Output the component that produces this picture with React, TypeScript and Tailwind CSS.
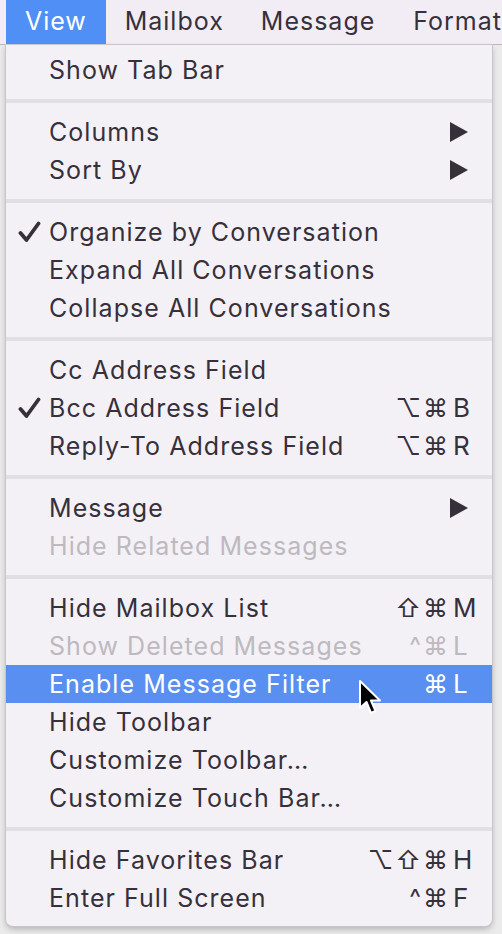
import React from "react";

type Item =
  | { sep: true }
  | {
      label: string;
      checked?: boolean;
      disabled?: boolean;
      active?: boolean;
      submenu?: boolean;
      mods?: string;
      keyName?: string;
    };

const ITEMS: Item[] = [
  { label: "Show Tab Bar" },
  { sep: true },
  { label: "Columns", submenu: true },
  { label: "Sort By", submenu: true },
  { sep: true },
  { label: "Organize by Conversation", checked: true },
  { label: "Expand All Conversations" },
  { label: "Collapse All Conversations" },
  { sep: true },
  { label: "Cc Address Field" },
  { label: "Bcc Address Field", checked: true, mods: "⌥⌘", keyName: "B" },
  { label: "Reply-To Address Field", mods: "⌥⌘", keyName: "R" },
  { sep: true },
  { label: "Message", submenu: true },
  { label: "Hide Related Messages", disabled: true },
  { sep: true },
  { label: "Hide Mailbox List", mods: "⇧⌘", keyName: "M" },
  { label: "Show Deleted Messages", disabled: true, mods: "^⌘", keyName: "L" },
  { label: "Enable Message Filter", active: true, mods: "⌘", keyName: "L" },
  { label: "Hide Toolbar" },
  { label: "Customize Toolbar…" },
  { label: "Customize Touch Bar…" },
  { sep: true },
  { label: "Hide Favorites Bar", mods: "⌥⇧⌘", keyName: "H" },
  { label: "Enter Full Screen", mods: "^⌘", keyName: "F" },
];

const FONT = "font-['Inter','DejaVu_Sans',sans-serif]";

export default function App() {
  return (
    <div className={`h-[934px] w-[502px] overflow-hidden bg-[#ebebeb] ${FONT}`}>
      {/* menu bar */}
      <div className="flex h-[45px] items-stretch border-b border-[#bcb8be] bg-[#f2edf5] text-[25px] tracking-[1px] text-[#36303b]">
        <div className="ml-[6px] flex w-[100px] items-center justify-center bg-[#4f8ff6] text-white">
          View
        </div>
        <div className="ml-[19px] flex items-center">Mailbox</div>
        <div className="ml-[37px] flex items-center">Message</div>
        <div className="ml-[38px] flex items-center whitespace-nowrap">Format</div>
      </div>

      {/* dropdown */}
      <div className="ml-[6px] w-[486px] rounded-b-[7px] bg-[#f4f1f6] pb-[9px] pt-[6px] shadow-[0_3px_6px_rgba(0,0,0,0.25)] ring-1 ring-[#c9c6cb]">
        {ITEMS.map((item, i) =>
          "sep" in item ? (
            <div key={i} className="my-[10px] h-[4px] bg-[#e1dee4]" />
          ) : (
            <Row key={i} item={item} />
          ),
        )}
      </div>
    </div>
  );
}

function Row({ item }: { item: Exclude<Item, { sep: true }> }) {
  const color = item.active
    ? "text-white"
    : item.disabled
      ? "text-[#bdb9bf]"
      : "text-[#36303b]";
  return (
    <div
      className={[
        "relative flex h-[38px] items-center text-[25px] leading-none",
        item.active ? "bg-[#5a8ff2]" : "",
        color,
      ].join(" ")}
    >
      <div className="flex w-[43px] justify-start pl-[12px]">
        {item.checked && (
          <svg width="23" height="22" viewBox="0 0 23 22">
            <path
              d="M2.5 12 L8.5 19 L20.5 2.5"
              fill="none"
              stroke="#36303b"
              strokeWidth="3.8"
              strokeLinecap="round"
              strokeLinejoin="round"
            />
          </svg>
        )}
      </div>
      <div className="flex-1 whitespace-nowrap tracking-[1.05px]">{item.label}</div>
      {item.submenu && (
        <svg className="mr-[24px]" width="18" height="20" viewBox="0 0 18 20">
          <polygon points="0,0 18,10 0,20" fill="#36303b" />
        </svg>
      )}
      {item.keyName && (
        <div className="mr-[13px] flex items-center">
          <span className="whitespace-nowrap pr-[3px] text-right tracking-[2px]">{item.mods}</span>
          <span className="w-[26px] text-[26px]">{item.keyName}</span>
        </div>
      )}
      {item.active && (
        <svg
          className="absolute left-[351px] top-[14px]"
          width="26"
          height="38"
          viewBox="0 0 26 38"
        >
          <path
            d="M3 2 L3 29 L9.5 23 L14 34 L18.5 32 L14 21.5 L23 21.5 Z"
            fill="#000"
            stroke="#fff"
            strokeWidth="2"
            strokeLinejoin="round"
          />
        </svg>
      )}
    </div>
  );
}
